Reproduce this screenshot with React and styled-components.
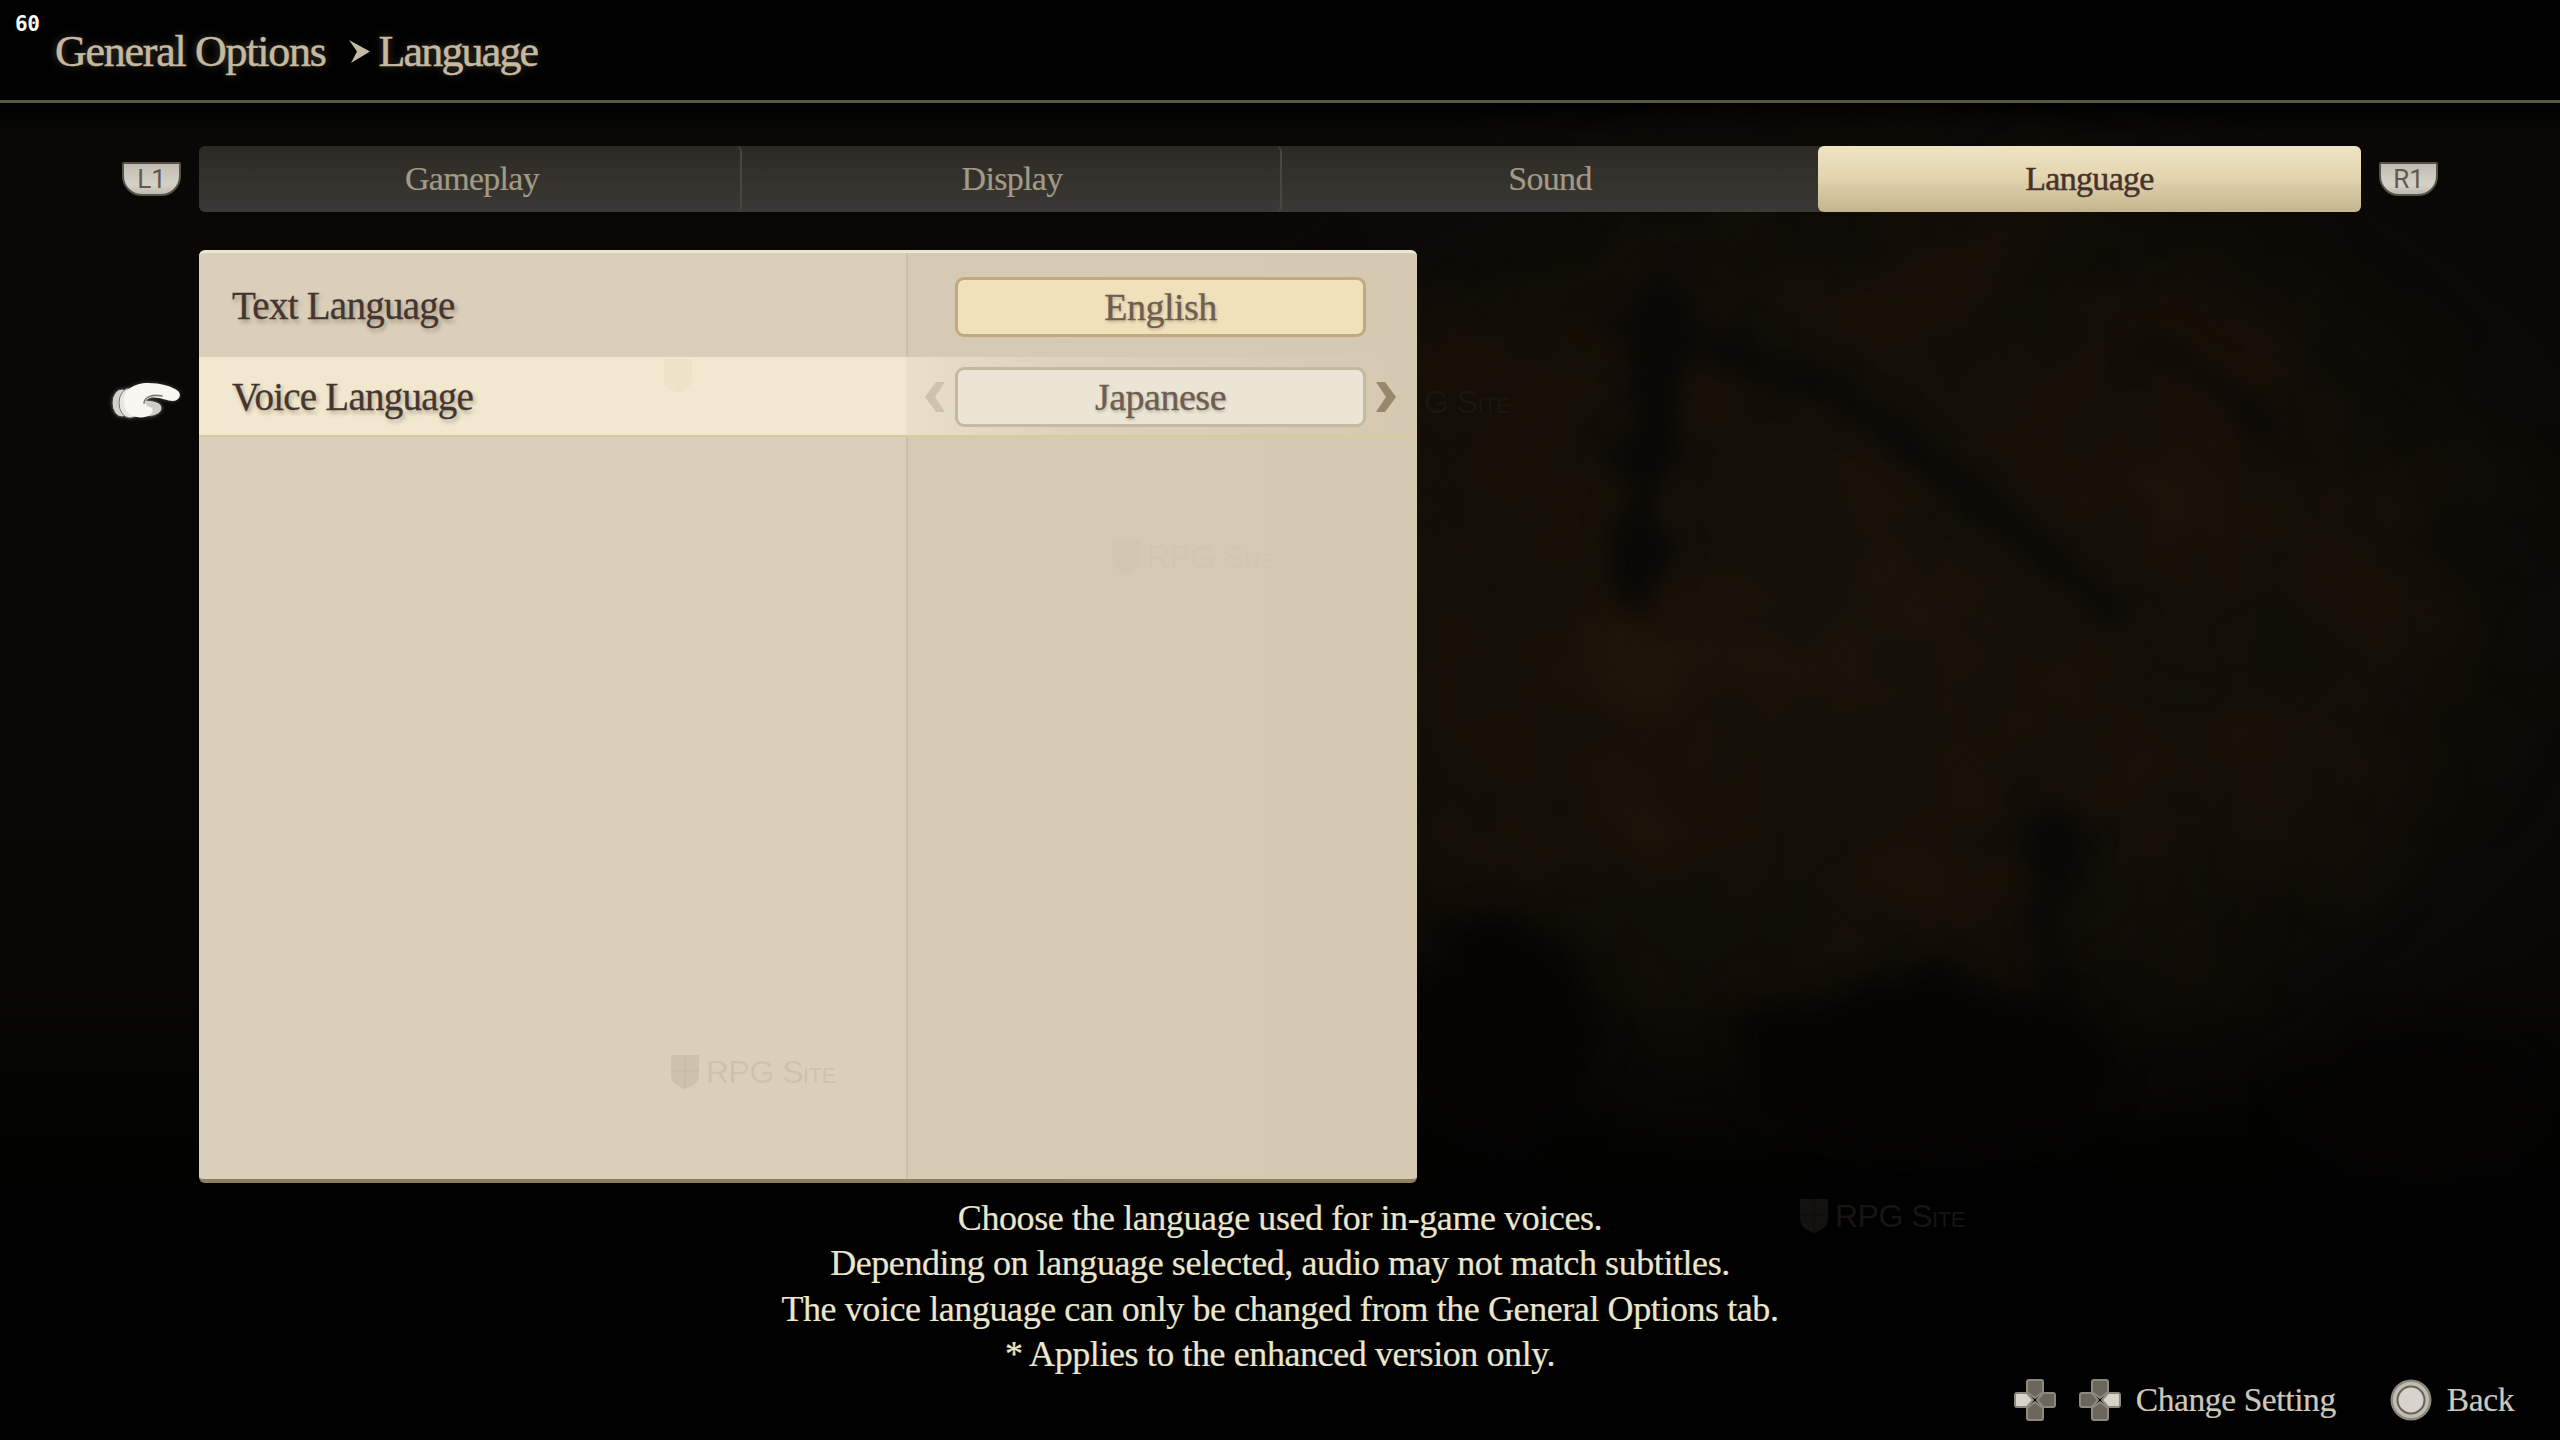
import React from 'react';
import styled, { createGlobalStyle } from 'styled-components';

const GlobalStyle = createGlobalStyle`
  html, body {
    margin: 0;
    padding: 0;
    background: #000;
  }
  * {
    box-sizing: border-box;
  }
`;

const SERIF = `"Liberation Serif", "Times New Roman", serif`;

const Page = styled.div`
  position: relative;
  isolation: isolate;
  width: 2560px;
  height: 1440px;
  overflow: hidden;
  display: flex;
  flex-direction: column;
  font-family: ${SERIF};
  background:
    radial-gradient(ellipse 860px 560px at 1850px 620px, #15110a 0%, #110d07 60%, rgba(8, 6, 4, 0) 100%),
    linear-gradient(180deg, #000 0%, #000 103px, #090806 135px, #080705 960px, #020201 1160px, #000 1240px);
`;

const Backdrop = styled.svg`
  position: absolute;
  left: 0;
  top: 0;
  width: 2560px;
  height: 1440px;
  z-index: -1;
`;

const Fps = styled.span`
  position: absolute;
  left: 15px;
  top: 12px;
  font-family: "DejaVu Sans Mono", monospace;
  font-size: 21px;
  font-weight: 700;
  letter-spacing: -0.4px;
  color: #fff;
`;

const Header = styled.header`
  height: 103px;
  flex: none;
  display: flex;
  align-items: center;
  padding: 2px 0 0 55px;
  border-bottom: 3px solid #5b5344;
  background: #000;
`;

const Crumb = styled.span`
  font-size: 44px;
  letter-spacing: ${p => p.$spacing}px;
  color: #c5baa0;
  -webkit-text-stroke: 0.5px #c5baa0;
  text-shadow: 0 0 9px rgba(197, 186, 160, 0.4);
`;

const CrumbArrow = styled.svg`
  width: 21px;
  height: 23px;
  fill: #c5baa0;
  margin: 0 9px 0 23px;
`;

const TabRow = styled.nav`
  flex: none;
  display: flex;
  align-items: center;
  gap: 18px;
  margin-top: 43px;
  padding-left: 122px;
`;

const Shoulder = styled.div`
  width: 59px;
  height: 34px;
  display: flex;
  align-items: center;
  justify-content: center;
  font-family: "Roboto", sans-serif;
  font-size: 26px;
  color: #5f5a51;
  background: linear-gradient(180deg, #c2bdb1, #d6d1c7 70%, #bfbaae);
  border: 2px solid #57534a;
  border-radius: 2px 2px 20px 20px;
`;

const Tabs = styled.div`
  width: 2162px;
  height: 66px;
  display: grid;
  grid-template-columns: 543px 540px 536px 543px;
  border-radius: 6px;
  background: linear-gradient(180deg, #2d2a25, #3b3935);
`;

const Tab = styled.div`
  display: flex;
  align-items: center;
  justify-content: center;
  padding-left: ${p => p.$nudge || 0}px;
  font-size: 34px;
  letter-spacing: -0.7px;
  border-radius: 6px;
  border-right: ${p => (p.$divider ? '2px solid #4a473f' : 'none')};
  color: ${p => (p.$active ? '#46332b' : '#a39a85')};
  background: ${p => (p.$active ? 'linear-gradient(180deg, #efe4c4 0%, #e3d6b0 45%, #c3b48d 100%)' : 'none')};
  -webkit-text-stroke: ${p => (p.$active ? '0.5px #46332b' : '0.2px #a39a85')};
`;

const Main = styled.main`
  flex: none;
  position: relative;
  width: 1218px;
  height: 933px;
  margin: 38px 0 0 199px;
  border-radius: 6px;
  border-top: 3px solid #eee6d4;
  border-bottom: 4px solid #8f7d5f;
  background: linear-gradient(90deg, #d9cfba 0, #dacfbb 707px, #d6cab4 709px, #d5c9b2 100%);
  display: flex;
  flex-direction: column;
`;

const ColumnLine = styled.div`
  position: absolute;
  left: 707px;
  top: 0;
  bottom: 0;
  width: 2px;
  background: rgba(190, 175, 145, 0.4);
`;

const Row = styled.div`
  position: relative;
  display: grid;
  grid-template-columns: 707px 1fr;
  height: ${p => p.$height}px;
  align-items: center;
  ${p => p.$active && `
    background: linear-gradient(90deg, #f1e8cf 0, #f1e8cf 707px, rgba(241, 232, 207, 0.72) 709px, rgba(241, 232, 207, 0.28) 860px, rgba(241, 232, 207, 0.08) 1100px, rgba(241, 232, 207, 0) 1200px);
    border-bottom: 2px solid #dcc99a;
  `}
`;

const RowLabel = styled.span`
  padding-left: 33px;
  font-size: 39px;
  letter-spacing: -0.75px;
  color: #453530;
  -webkit-text-stroke: 0.3px #453530;
  text-shadow: 2px 3px 4px rgba(80, 60, 40, 0.4);
`;

const ValueCell = styled.div`
  display: flex;
  align-items: center;
  justify-content: center;
  gap: 10px;
  padding-right: 2px;
  margin-top: ${p => p.$shift || 0}px;
`;

const ValueBox = styled.div`
  width: 411px;
  height: 60px;
  display: flex;
  align-items: center;
  justify-content: center;
  font-size: 38px;
  letter-spacing: -0.5px;
  color: #6d5d52;
  -webkit-text-stroke: 0.3px #6d5d52;
  border-radius: 9px;
  border: 3px solid ${p => (p.$current ? '#c0a97f' : '#c5b9a0')};
  background: ${p => (p.$current ? '#f1e1ba' : '#ebe5d5')};
  text-shadow: 1px 2px 3px rgba(80, 60, 40, 0.3);
`;

const Chevron = styled.svg`
  width: 20px;
  height: 30px;
  flex: none;
  fill: ${p => p.$color};
`;

const Cursor = styled.svg`
  position: absolute;
  left: 100px;
  top: 370px;
  width: 90px;
  height: 60px;
  filter: drop-shadow(0 0 2px rgba(255, 255, 255, 0.25));
`;

const Watermark = styled.div`
  position: absolute;
  left: ${p => p.$x}px;
  top: ${p => p.$y}px;
  display: flex;
  align-items: center;
  gap: 5px;
  font-family: "Liberation Sans", sans-serif;
  font-size: 32px;
  font-variant: small-caps;
  letter-spacing: -0.5px;
  color: ${p => p.$color};
  opacity: ${p => p.$opacity};
`;

const Description = styled.section`
  flex: none;
  margin-top: 13px;
  text-align: center;
  font-size: 36px;
  line-height: 45.3px;
  letter-spacing: -0.42px;
  color: #ebe6ce;
  -webkit-text-stroke: 0.2px #ebe6ce;
`;

const Footer = styled.footer`
  flex: none;
  display: flex;
  align-items: center;
  justify-content: flex-end;
  height: 44px;
  margin-top: 1px;
  padding-right: 46px;
  font-size: 33.5px;
  letter-spacing: -0.4px;
  color: #cdc8bc;
  -webkit-text-stroke: 0.2px #cdc8bc;
`;

const Hint = styled.div`
  display: flex;
  align-items: center;
  gap: 15px;
  margin-left: ${p => p.$gap}px;
`;

const PadIcons = styled.div`
  display: flex;
  gap: 23px;
`;

const ButtonIcon = styled.svg`
  filter: blur(0.6px);
`;

const PadArm = ({ d, lit }) => (
  <path d={d} fill={lit ? '#d8d3c9' : '#6a665c'} stroke="#8d897d" strokeWidth="2" strokeLinejoin="round" />
);

const PadGlyph = ({ lit }) => (
  <ButtonIcon width="42" height="44" viewBox="0 0 42 44">
    <PadArm d="M15 2h12a2 2 0 0 1 2 2v10l-8 6-8-6V4a2 2 0 0 1 2-2z" lit={lit === 'up'} />
    <PadArm d="M15 42h12a2 2 0 0 0 2-2V30l-8-6-8 6v10a2 2 0 0 0 2 2z" lit={lit === 'down'} />
    <PadArm d="M3 15h10l6 7-6 7H3a2 2 0 0 1-2-2V17a2 2 0 0 1 2-2z" lit={lit === 'left'} />
    <PadArm d="M39 15H29l-6 7 6 7h10a2 2 0 0 0 2-2V17a2 2 0 0 0-2-2z" lit={lit === 'right'} />
  </ButtonIcon>
);

const CircleGlyph = () => (
  <ButtonIcon width="42" height="42" viewBox="0 0 42 42">
    <circle cx="21" cy="21" r="20.5" fill="#8e8a7e" />
    <circle cx="21" cy="21" r="18" fill="#c2bdb1" />
    <circle cx="21" cy="21" r="13.5" fill="#d8d3cd" stroke="#66625a" strokeWidth="2" />
  </ButtonIcon>
);

const ShieldGlyph = ({ color }) => (
  <svg width="32" height="38" viewBox="0 0 32 38">
    <path d="M2 2h28v20c0 8-8 12-14 14C10 34 2 30 2 22z" fill={color} />
    <path d="M16 2v34M2 18h28" stroke="rgba(0, 0, 0, 0.12)" strokeWidth="2" />
  </svg>
);

const App = () => (
  <Page>
    <GlobalStyle />
    <Backdrop viewBox="0 0 2560 1440">
      <defs>
        <filter id="mottle" x="0" y="0" width="100%" height="100%" colorInterpolationFilters="sRGB">
          <feTurbulence type="fractalNoise" baseFrequency="0.007" numOctaves="3" seed="11" />
          <feColorMatrix values="0 0 0 0 0.17  0 0 0 0 0.1  0 0 0 0 0.03  0.9 0 0 0 -0.33" />
        </filter>
        {/* rough edges so the dark map lines don't read as clean strokes */}
        <filter id="soft" x="-20%" y="-20%" width="140%" height="140%" colorInterpolationFilters="sRGB">
          <feTurbulence type="fractalNoise" baseFrequency="0.02" numOctaves="2" seed="4" result="noise" />
          <feDisplacementMap in="SourceGraphic" in2="noise" scale="70" />
          <feGaussianBlur stdDeviation="14" />
        </filter>
        <radialGradient id="fade" cx="1850" cy="600" r="1" gradientUnits="userSpaceOnUse" gradientTransform="translate(1850 600) scale(760 520) translate(-1850 -600)">
          <stop offset="0.55" stopColor="#fff" />
          <stop offset="1" stopColor="#000" />
        </radialGradient>
        <mask id="fadeMask"><rect width="2560" height="1440" fill="url(#fade)" /></mask>
      </defs>
      <g mask="url(#fadeMask)">
        <rect width="2560" height="1440" filter="url(#mottle)" />
      </g>
      <g filter="url(#soft)" fill="none" stroke="#090806" strokeLinecap="round">
        <path d="M1660 300c-10 90-20 170-20 290" strokeWidth="44" />
        <path d="M1620 330c60 20 100 10 210 60 90 60 170 130 280 215" strokeWidth="24" />
        <path d="M2140 340c50 20 90 50 125 90" strokeWidth="20" />
        <path d="M2060 830c-20 60-10 130 0 200" strokeWidth="40" />
      </g>
      <g filter="url(#soft)" fill="#050403">
        <ellipse cx="1500" cy="1040" rx="95" ry="120" />
        <ellipse cx="1930" cy="1070" rx="190" ry="90" />
        <ellipse cx="2420" cy="1110" rx="130" ry="80" />
      </g>
    </Backdrop>
    <Fps>60</Fps>
    <Header>
      <Crumb $spacing={-1.27}>General Options</Crumb>
      <CrumbArrow viewBox="0 0 21 23"><path d="M0 0l21 11.5L2 23l6-11.5z" /></CrumbArrow>
      <Crumb $spacing={-1.85}>Language</Crumb>
    </Header>
    <TabRow>
      <Shoulder>L1</Shoulder>
      <Tabs>
        <Tab $divider $nudge={5}>Gameplay</Tab>
        <Tab $divider $nudge={2}>Display</Tab>
        <Tab>Sound</Tab>
        <Tab $active>Language</Tab>
      </Tabs>
      <Shoulder>R1</Shoulder>
    </TabRow>
    <Main>
      <ColumnLine />
      <Row $height={104}>
        <RowLabel>Text Language</RowLabel>
        <ValueCell $shift={4}>
          <ValueBox $current>English</ValueBox>
        </ValueCell>
      </Row>
      <Row $active $height={80}>
        <RowLabel>Voice Language</RowLabel>
        <ValueCell $shift={2}>
          <Chevron $color="#cdc3ab" viewBox="0 0 20 30"><path d="M20 0L10 15l10 15H11L0 15 11 0z" /></Chevron>
          <ValueBox>Japanese</ValueBox>
          <Chevron $color="#97876b" viewBox="0 0 20 30"><path d="M0 0l10 15L0 30h9l11-15L9 0z" /></Chevron>
        </ValueCell>
      </Row>
      <Watermark $x={463} $y={104} $color="#aa9b7d" $opacity={0.06}>
        <ShieldGlyph color="#aa9b7d" />
      </Watermark>
      <Watermark $x={911} $y={285} $color="#aa9b7d" $opacity={0.05}>
        <ShieldGlyph color="#aa9b7d" />RPG Site
      </Watermark>
      <Watermark $x={470} $y={800} $color="#aa9b7d" $opacity={0.24}>
        <ShieldGlyph color="#aa9b7d" />RPG Site
      </Watermark>
    </Main>
    <Cursor viewBox="0 0 90 60">
      <ellipse cx="22" cy="33" rx="10" ry="14" fill="#d3d2ca" stroke="#3a3832" strokeWidth="1" />
      <ellipse cx="30" cy="33" rx="11" ry="15" fill="#e6e5de" stroke="#77756c" strokeWidth="1" />
      <path d="M44 30C52 30 62 32 62 38C62 44 52 48 44 46z" fill="#cfcec6" stroke="#3a3832" strokeWidth="1" />
      <path d="M24 30C24 20 34 13 48 13C60 13 72 16 78 21C82 25 79 31 73 31C66 31 58 26 50 28C44 30 44 36 50 37C53 38 54 42 50 45C44 49 32 48 27 42C24 38 24 34 24 30z" fill="#f8f7f2" />
      <path d="M44 33C45 27 52 24 62 26" fill="none" stroke="#7c7a72" strokeWidth="1.6" strokeLinecap="round" />
    </Cursor>
    <Watermark $x={1424} $y={384} $color="#1a1610" $opacity={1}>G Site</Watermark>
    <Watermark $x={1798} $y={1197} $color="#171512" $opacity={1}>
      <ShieldGlyph color="#131210" />RPG Site
    </Watermark>
    <Description>
      <div>Choose the language used for in-game voices.</div>
      <div>Depending on language selected, audio may not match subtitles.</div>
      <div>The voice language can only be changed from the General Options tab.</div>
      <div>* Applies to the enhanced version only.</div>
    </Description>
    <Footer>
      <Hint $gap={0}>
        <PadIcons>
          <PadGlyph lit="left" />
          <PadGlyph lit="right" />
        </PadIcons>
        <span>Change Setting</span>
      </Hint>
      <Hint $gap={54}>
        <CircleGlyph />
        <span>Back</span>
      </Hint>
    </Footer>
  </Page>
);

export default App;
